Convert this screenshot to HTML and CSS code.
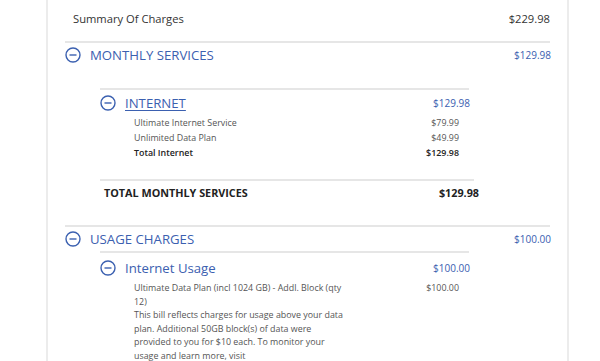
FILE: index.html
```html
<!DOCTYPE html>
<html lang="en">
<head>
    <meta charset="UTF-8">
    <title>Bill - Summary Of Charges</title>
    <link rel="stylesheet" href="styles.css">
</head>
<body>
    <div class="bill-card">
        <div class="summary-row">
            <span>Summary Of Charges</span>
            <span>$229.98</span>
        </div>

        <!-- Monthly services -->
        <div class="section">
            <div class="section-head">
                <span class="toggle">
                    <svg viewBox="0 0 16 16" width="16" height="16"><circle cx="8" cy="8" r="7" fill="none" stroke="currentColor" stroke-width="1.4"/><line x1="4.5" y1="8" x2="11.5" y2="8" stroke="currentColor" stroke-width="1.4"/></svg>
                </span>
                <span class="section-title">MONTHLY SERVICES</span>
                <span class="section-amount">$129.98</span>
            </div>

            <div class="sub-section sub-spaced">
                <div class="sub-head">
                    <span class="toggle">
                        <svg viewBox="0 0 16 16" width="16" height="16"><circle cx="8" cy="8" r="7" fill="none" stroke="currentColor" stroke-width="1.4"/><line x1="4.5" y1="8" x2="11.5" y2="8" stroke="currentColor" stroke-width="1.4"/></svg>
                    </span>
                    <a class="sub-title link" href="#">INTERNET</a>
                    <span class="sub-amount">$129.98</span>
                </div>
                <div class="line-items">
                    <div class="item"><span>Ultimate Internet Service</span><span>$79.99</span></div>
                    <div class="item"><span>Unlimited Data Plan</span><span>$49.99</span></div>
                    <div class="item item-total"><span>Total Internet</span><span>$129.98</span></div>
                </div>
            </div>

            <div class="section-total">
                <span>TOTAL MONTHLY SERVICES</span>
                <span>$129.98</span>
            </div>
        </div>

        <!-- Usage charges -->
        <div class="section">
            <div class="section-head">
                <span class="toggle">
                    <svg viewBox="0 0 16 16" width="16" height="16"><circle cx="8" cy="8" r="7" fill="none" stroke="currentColor" stroke-width="1.4"/><line x1="4.5" y1="8" x2="11.5" y2="8" stroke="currentColor" stroke-width="1.4"/></svg>
                </span>
                <span class="section-title">USAGE CHARGES</span>
                <span class="section-amount">$100.00</span>
            </div>

            <div class="sub-section sub-usage">
                <div class="sub-head">
                    <span class="toggle">
                        <svg viewBox="0 0 16 16" width="16" height="16"><circle cx="8" cy="8" r="7" fill="none" stroke="currentColor" stroke-width="1.4"/><line x1="4.5" y1="8" x2="11.5" y2="8" stroke="currentColor" stroke-width="1.4"/></svg>
                    </span>
                    <span class="sub-title">Internet Usage</span>
                    <span class="sub-amount">$100.00</span>
                </div>
                <div class="line-items">
                    <div class="item item-wrap">
                        <span class="item-desc">Ultimate Data Plan (incl 1024 GB) - Addl. Block (qty 12)<br>This bill reflects charges for usage above your data plan. Additional 50GB block(s) of data were provided to you for $10 each. To monitor your usage and learn more, visit</span>
                        <span>$100.00</span>
                    </div>
                </div>
            </div>
        </div>
    </div>
</body>
</html>
```

FILE: styles.css
```css
/* Base */
* {
    margin: 0;
    padding: 0;
    box-sizing: border-box;
}

body {
    font-family: 'Open Sans', sans-serif;
    background: #fff;
    color: #333;
    height: 361px;
    overflow: hidden;
}

/* Card */
.bill-card {
    margin-left: 46px;
    width: 523px;
    min-height: 361px;
    padding: 0 17px;
    border-left: 2px solid #ececec;
    border-right: 2px solid #ececec;
}

.summary-row {
    display: flex;
    justify-content: space-between;
    align-items: center;
    font-size: 11.2px;
    line-height: 22px;
    padding: 8px 0 11px 8px;
    color: #333;
}

/* Sections */
.section {
    border-top: 2px solid #e6e6e6;
    padding-bottom: 22px;
}

.section-head,
.sub-head {
    display: flex;
    align-items: center;
    color: #3b60b0;
}

.section-head {
    height: 23px;
}

.toggle {
    display: flex;
    width: 16px;
    height: 16px;
    margin-right: 9px;
}

.section-title {
    font-size: 13.2px;
    flex-grow: 1;
}

.section-amount {
    font-size: 10px;
    margin-right: -1px;
}

.sub-section {
    margin: 0 81px 0 35px;
    border-top: 2px solid #e6e6e6;
}

.sub-spaced {
    margin-top: 22px;
}

.sub-usage {
    margin-top: 1px;
}

.sub-usage .sub-head {
    height: 27px;
    padding-top: 2px;
}

.sub-head {
    height: 25px;
}

.sub-title {
    font-size: 13.2px;
    flex-grow: 1;
    color: #3b60b0;
}

.link {
    text-decoration: underline;
    text-underline-offset: 2px;
}

.sub-amount {
    font-size: 10px;
    margin-right: -1px;
}

/* Line items */
.line-items {
    padding: 0 10px 0 34px;
    font-size: 8.9px;
    color: #555;
}

.item {
    display: flex;
    justify-content: space-between;
    line-height: 15px;
}

.item-total {
    font-weight: 600;
    color: #222;
}

.item-wrap {
    line-height: 13.6px;
    padding-top: 1px;
}

.item-desc {
    width: 214px;
}

.sub-section + .section-total {
    margin-top: 19px;
}

.section-total {
    display: flex;
    justify-content: space-between;
    align-items: center;
    height: 24px;
    margin: 0 76px 0 35px;
    padding: 0 0 0 4px;
    border-top: 2px solid #e6e6e6;
    font-size: 10.8px;
    font-weight: 700;
    color: #222;
}

.section-total span:last-child {
    margin-right: -5px;
}
```
